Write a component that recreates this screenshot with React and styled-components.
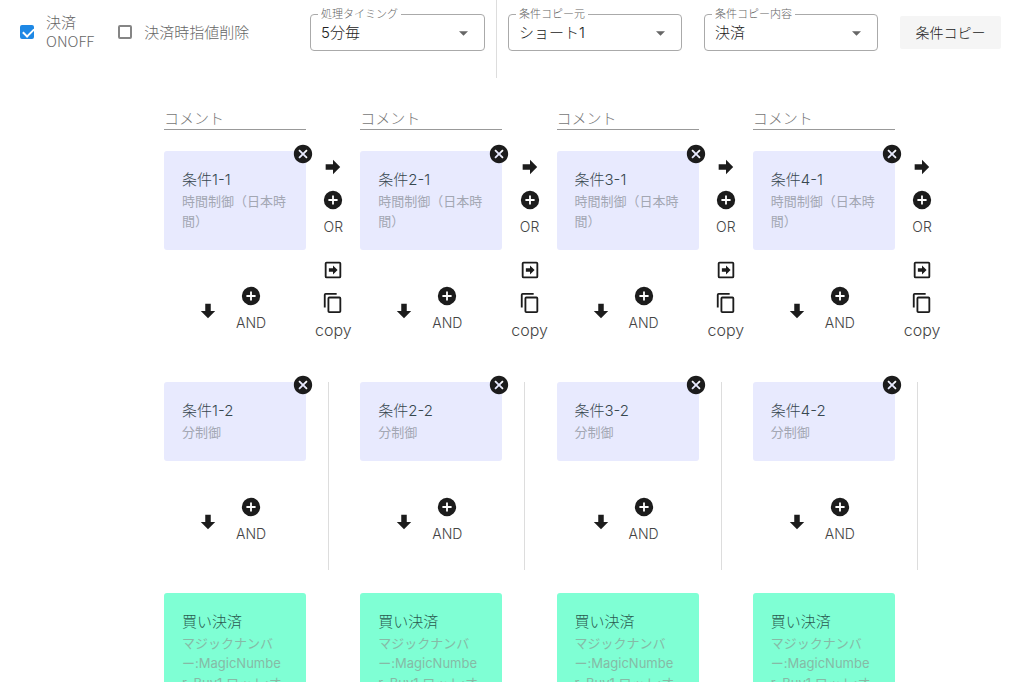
import { useState } from "react";
import styled, { createGlobalStyle } from "styled-components";

const columns = [1, 2, 3, 4];

const icons = {
  right: "M4,15V9H12V4.16L19.84,12L12,19.84V15H4Z",
  down: "M9,4H15V12H19.84L12,19.84L4.16,12H9V4Z",
  plus: "M17,13H13V17H11V13H7V11H11V7H13V11H17M12,2A10,10 0 0,0 2,12A10,10 0 0,0 12,22A10,10 0 0,0 22,12A10,10 0 0,0 12,2Z",
  close:
    "M12,2C17.53,2 22,6.47 22,12C22,17.53 17.53,22 12,22C6.47,22 2,17.53 2,12C2,6.47 6.47,2 12,2M15.59,7L12,10.59L8.41,7L7,8.41L10.59,12L7,15.59L8.41,17L12,13.41L15.59,17L17,15.59L13.41,12L17,8.41L15.59,7Z",
  box: "M5,3H19A2,2 0 0,1 21,5V19A2,2 0 0,1 19,21H5A2,2 0 0,1 3,19V5A2,2 0 0,1 5,3M5,5V19H19V5H5M7.5,10H12V7L17,12L12,17V14H7.5V10Z",
  copy: "M19,21H8V7H19M19,5H8A2,2 0 0,0 6,7V21A2,2 0 0,0 8,23H19A2,2 0 0,0 21,21V7A2,2 0 0,0 19,5M16,1H4A2,2 0 0,0 2,3V17H4V3H16V1Z",
};

const Icon = ({ name }) => (
  <Svg viewBox="0 0 24 24" aria-hidden="true">
    <path d={icons[name]} fillRule="evenodd" />
  </Svg>
);

const SelectField = ({ id, label, value }) => (
  <Field>
    <FieldLabel htmlFor={id}>{label}</FieldLabel>
    <Select id={id} defaultValue={value}>
      <option>{value}</option>
    </Select>
    <Caret viewBox="0 0 10 5" aria-hidden="true">
      <path d="M0 0h10L5 5z" />
    </Caret>
  </Field>
);

const Card = ({ title, text, green }) => (
  <CardBox $green={green}>
    <CardTitle $green={green}>{title}</CardTitle>
    <CardText $green={green}>{text}</CardText>
    {!green && (
      <CloseButton aria-label="close">
        <Icon name="close" />
      </CloseButton>
    )}
  </CardBox>
);

const AndLink = () => (
  <Connector>
    <DownButton aria-label="down">
      <Icon name="down" />
    </DownButton>
    <IconButton>
      <Icon name="plus" />
      <Caption>AND</Caption>
    </IconButton>
  </Connector>
);

const Column = ({ n }) => (
  <ColumnBox>
    <Comment placeholder="コメント" aria-label="コメント" />
    <Step>
      <Main>
        <Card title={`条件${n}-1`} text="時間制御（日本時間）" />
        <AndLink />
      </Main>
      <Side>
        <IconButton aria-label="right">
          <Icon name="right" />
        </IconButton>
        <OrButton>
          <Icon name="plus" />
          <Caption>OR</Caption>
        </OrButton>
        <IconButton aria-label="move">
          <Icon name="box" />
        </IconButton>
        <IconButton>
          <Icon name="copy" />
          <CopyCaption>copy</CopyCaption>
        </IconButton>
      </Side>
    </Step>
    <Step>
      <Main>
        <Card title={`条件${n}-2`} text="分制御" />
        <AndLink />
      </Main>
      <Rule />
    </Step>
    <Step>
      <Main>
        <Card
          green
          title="買い決済"
          text={"マジックナンバ\nー:MagicNumbe\nr, Buy1 ロット:オ"}
        />
      </Main>
    </Step>
  </ColumnBox>
);

const App = () => {
  const [settle, setSettle] = useState(true);
  const [remove, setRemove] = useState(false);

  return (
    <Page>
      <GlobalStyle />
      <Toolbar>
        <Checks>
          <Check>
            <Checkbox
              type="checkbox"
              checked={settle}
              onChange={(e) => setSettle(e.target.checked)}
            />
            <CheckText>
              決済
              <br />
              ONOFF
            </CheckText>
          </Check>
          <Check>
            <Checkbox
              type="checkbox"
              checked={remove}
              onChange={(e) => setRemove(e.target.checked)}
            />
            <CheckText>決済時指値削除</CheckText>
          </Check>
        </Checks>
        <SelectField id="timing" label="処理タイミング" value="5分毎" />
        <Divider />
        <CopyTools>
          <SelectField id="source" label="条件コピー元" value="ショート1" />
          <SelectField id="content" label="条件コピー内容" value="決済" />
          <GrayButton>条件コピー</GrayButton>
        </CopyTools>
      </Toolbar>
      <Board>
        {columns.map((n) => (
          <Column key={n} n={n} />
        ))}
      </Board>
    </Page>
  );
};

export default App;

const GlobalStyle = createGlobalStyle`
  * {
    box-sizing: border-box;
  }
  body {
    margin: 0;
    background: #fff;
    color: #666;
    font-family: "Inter", "Noto Sans CJK JP", sans-serif;
    font-weight: 300;
    font-size: 15px;
  }
  button, input, select {
    margin: 0;
    padding: 0;
    border: 0;
    background: none;
    color: inherit;
    font: inherit;
  }
`;

const Page = styled.div`
  height: 100vh;
  overflow: hidden;
`;

const Toolbar = styled.header`
  display: flex;
  height: 78px;
  padding: 0 23px 0 20px;
`;

const Checks = styled.div`
  display: flex;
  align-items: center;
  gap: 24px;
  width: 290px;
  height: 64px;
`;

const Check = styled.label`
  display: flex;
  align-items: center;
  gap: 12px;
`;

const Checkbox = styled.input`
  appearance: none;
  width: 14px;
  height: 14px;
  border: 2px solid #858585;
  border-radius: 2px;

  &:checked {
    border-color: #1e88e5;
    background: #1e88e5;
  }
  /* tick mark */
  &:checked::after {
    content: "";
    display: block;
    width: 5px;
    height: 9px;
    margin: -1px 3px 0;
    border: solid #fff;
    border-width: 0 2px 2px 0;
    transform: rotate(45deg);
  }
`;

const CheckText = styled.span`
  padding-bottom: 2px;
  font-family: "Noto Sans CJK JP", sans-serif;
  line-height: 19px;
`;

const Field = styled.div`
  position: relative;
  flex: 1;
  height: 37px;
  margin-top: 14px;
`;

const FieldLabel = styled.label`
  position: absolute;
  top: -8px;
  left: 8px;
  padding: 0 3px;
  background: #fff;
  font-size: 11px;
  line-height: 16px;
`;

const Select = styled.select`
  appearance: none;
  width: 100%;
  height: 100%;
  padding: 0 32px 0 10px;
  border: 1px solid #aaa;
  border-radius: 4px;
  color: #222;
`;

const Caret = styled.svg`
  position: absolute;
  top: 17px;
  right: 17px;
  width: 9px;
  height: 5px;
  fill: #666;
  pointer-events: none;
`;

const Divider = styled.div`
  width: 1px;
  margin: 0 11px;
  background: #ddd;
`;

const CopyTools = styled.div`
  display: flex;
  flex: 0 0 493px;
  gap: 22px;
`;

const GrayButton = styled.button`
  width: 101px;
  height: 33px;
  margin-top: 16px;
  padding-bottom: 2px;
  border-radius: 2px;
  background: #f5f5f5;
  color: #222;
  font-size: 14px;
`;

const Board = styled.main`
  display: grid;
  grid-template-columns: repeat(4, 1fr);
  padding: 29px 75px 0 164px;
`;

const ColumnBox = styled.section`
  display: flex;
  flex-direction: column;
`;

const Comment = styled.input`
  width: 142px;
  height: 23px;
  margin-bottom: 21px;
  border-bottom: 1px solid #999;

  &::placeholder {
    color: #777;
    opacity: 1;
  }
`;

const Step = styled.div`
  display: flex;
`;

const Main = styled.div`
  width: 142px;
`;

const CardBox = styled.article`
  position: relative;
  padding: 18px 18px 19px;
  border-radius: 3px;
  background: ${(props) => (props.$green ? "#7fffd4" : "#e8eafe")};
`;

const CardTitle = styled.h2`
  margin: 0;
  font-size: 15px;
  font-weight: 300;
  line-height: 22px;
  color: ${(props) => (props.$green ? "#2b5a50" : "#37474f")};
`;

const CardText = styled.p`
  margin: 0;
  font-size: 13px;
  font-weight: 400;
  line-height: 20px;
  white-space: pre-line;
  color: ${(props) => (props.$green ? "#86baa6" : "#a3a7b3")};
`;

const IconButton = styled.button`
  display: flex;
  flex-direction: column;
  align-items: center;
  cursor: pointer;
`;

const CloseButton = styled(IconButton)`
  position: absolute;
  top: -8px;
  right: -8px;
`;

const Svg = styled.svg`
  display: block;
  width: 22px;
  height: 22px;
  fill: #1c1c1c;
`;

const Connector = styled.div`
  display: flex;
  align-items: flex-start;
  gap: 17px;
  height: 132px;
  padding: 35px 0 0 33px;
`;

const DownButton = styled(IconButton)`
  margin-top: 15px;
`;

const Caption = styled.span`
  margin-top: 6px;
  font-size: 14px;
  line-height: 20px;
  color: #444;
`;

const CopyCaption = styled(Caption)`
  font-size: 16px;
`;

const Side = styled.div`
  display: flex;
  flex-direction: column;
  align-items: center;
  align-self: flex-start;
  gap: 11px;
  margin-left: 9px;
  padding-top: 5px;
`;

const OrButton = styled(IconButton)`
  margin-bottom: 11px;
`;

const Rule = styled.div`
  width: 1px;
  margin: 0 0 23px 22px;
  background: #ddd;
`;
